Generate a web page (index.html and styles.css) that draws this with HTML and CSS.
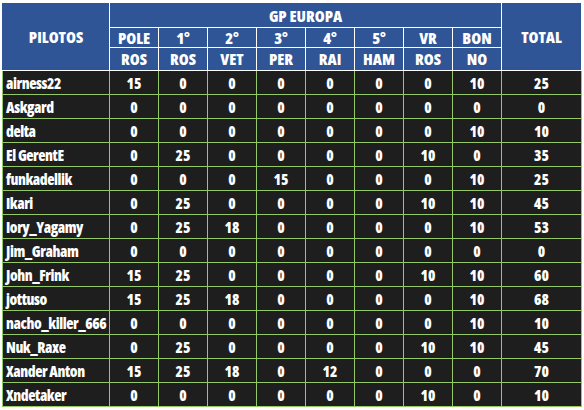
FILE: index.html
```html
<!DOCTYPE html>
<html lang="es">
<head>
  <meta charset="utf-8" />
  <title>GP Europa - Pilotos</title>
  <link rel="stylesheet" href="styles.css">
</head>
<body>
  <table class="standings">
    <colgroup>
      <col class="col-name">
      <col class="col-pts"><col class="col-pts"><col class="col-pts"><col class="col-pts">
      <col class="col-pts"><col class="col-pts"><col class="col-pts"><col class="col-pts">
      <col class="col-total">
    </colgroup>
    <thead>
      <tr class="row-gp">
        <th rowspan="3">PILOTOS</th>
        <th colspan="8">GP EUROPA</th>
        <th rowspan="3">TOTAL</th>
      </tr>
      <tr class="row-pos">
        <th>POLE</th><th>1°</th><th>2°</th><th>3°</th><th>4°</th><th>5°</th><th>VR</th><th>BON</th>
      </tr>
      <tr class="row-drv">
        <th>ROS</th><th>ROS</th><th>VET</th><th>PER</th><th>RAI</th><th>HAM</th><th>ROS</th><th>NO</th>
      </tr>
    </thead>
    <tbody>
      <tr><td>airness22</td><td>15</td><td>0</td><td>0</td><td>0</td><td>0</td><td>0</td><td>0</td><td>10</td><td>25</td></tr>
      <tr><td>Askgard</td><td>0</td><td>0</td><td>0</td><td>0</td><td>0</td><td>0</td><td>0</td><td>0</td><td>0</td></tr>
      <tr><td>delta</td><td>0</td><td>0</td><td>0</td><td>0</td><td>0</td><td>0</td><td>0</td><td>10</td><td>10</td></tr>
      <tr><td>El GerentE</td><td>0</td><td>25</td><td>0</td><td>0</td><td>0</td><td>0</td><td>10</td><td>0</td><td>35</td></tr>
      <tr><td>funkadellik</td><td>0</td><td>0</td><td>0</td><td>15</td><td>0</td><td>0</td><td>0</td><td>10</td><td>25</td></tr>
      <tr><td>Ikari</td><td>0</td><td>25</td><td>0</td><td>0</td><td>0</td><td>0</td><td>10</td><td>10</td><td>45</td></tr>
      <tr><td>Iory_Yagamy</td><td>0</td><td>25</td><td>18</td><td>0</td><td>0</td><td>0</td><td>0</td><td>10</td><td>53</td></tr>
      <tr><td>Jim_Graham</td><td>0</td><td>0</td><td>0</td><td>0</td><td>0</td><td>0</td><td>0</td><td>0</td><td>0</td></tr>
      <tr><td>John_Frink</td><td>15</td><td>25</td><td>0</td><td>0</td><td>0</td><td>0</td><td>10</td><td>10</td><td>60</td></tr>
      <tr><td>jottuso</td><td>15</td><td>25</td><td>18</td><td>0</td><td>0</td><td>0</td><td>0</td><td>10</td><td>68</td></tr>
      <tr><td>nacho_killer_666</td><td>0</td><td>0</td><td>0</td><td>0</td><td>0</td><td>0</td><td>0</td><td>10</td><td>10</td></tr>
      <tr><td>Nuk_Raxe</td><td>0</td><td>25</td><td>0</td><td>0</td><td>0</td><td>0</td><td>10</td><td>10</td><td>45</td></tr>
      <tr><td>Xander Anton</td><td>15</td><td>25</td><td>18</td><td>0</td><td>12</td><td>0</td><td>0</td><td>0</td><td>70</td></tr>
      <tr><td>Xndetaker</td><td>0</td><td>0</td><td>0</td><td>0</td><td>0</td><td>0</td><td>10</td><td>0</td><td>10</td></tr>
    </tbody>
  </table>
</body>
</html>
```

FILE: styles.css
```css
html, body {
  margin: 0;
  background: #ffffff;
}

body {
  padding: 3px 0 0 2px;
  font-family: "Open Sans", "DejaVu Sans Condensed", sans-serif;
  font-stretch: 75%;
  font-weight: 800;
  font-size: 15px;
  color: #ffffff;
}

.standings {
  border-collapse: collapse;
  table-layout: fixed;
  width: 579px;
}

.col-name {
  width: 107px;
}

.col-pts {
  width: 49px;
}

.col-total {
  width: 80px;
}

.standings th,
.standings td {
  padding: 0;
  text-align: center;
  white-space: nowrap;
  overflow: hidden;
  line-height: 18px;
}

.standings th {
  background-color: #2f5597;
  border: 1px solid #ffffff;
  font-weight: 800;
  font-size: 16px;
}

.standings thead tr:first-child th {
  border-top-color: #2f5597;
}

.standings thead th:first-child {
  border-left-color: #2f5597;
}

.row-gp th {
  height: 23px;
}

.row-pos th {
  height: 19px;
}

.row-drv th {
  height: 22px;
}

.standings td {
  background-color: #1e1e1e;
  border: 1px solid #95c965;
  height: 23px;
}

.standings td:first-child {
  text-align: left;
  padding-left: 3px;
  letter-spacing: -0.45px;
}
```
